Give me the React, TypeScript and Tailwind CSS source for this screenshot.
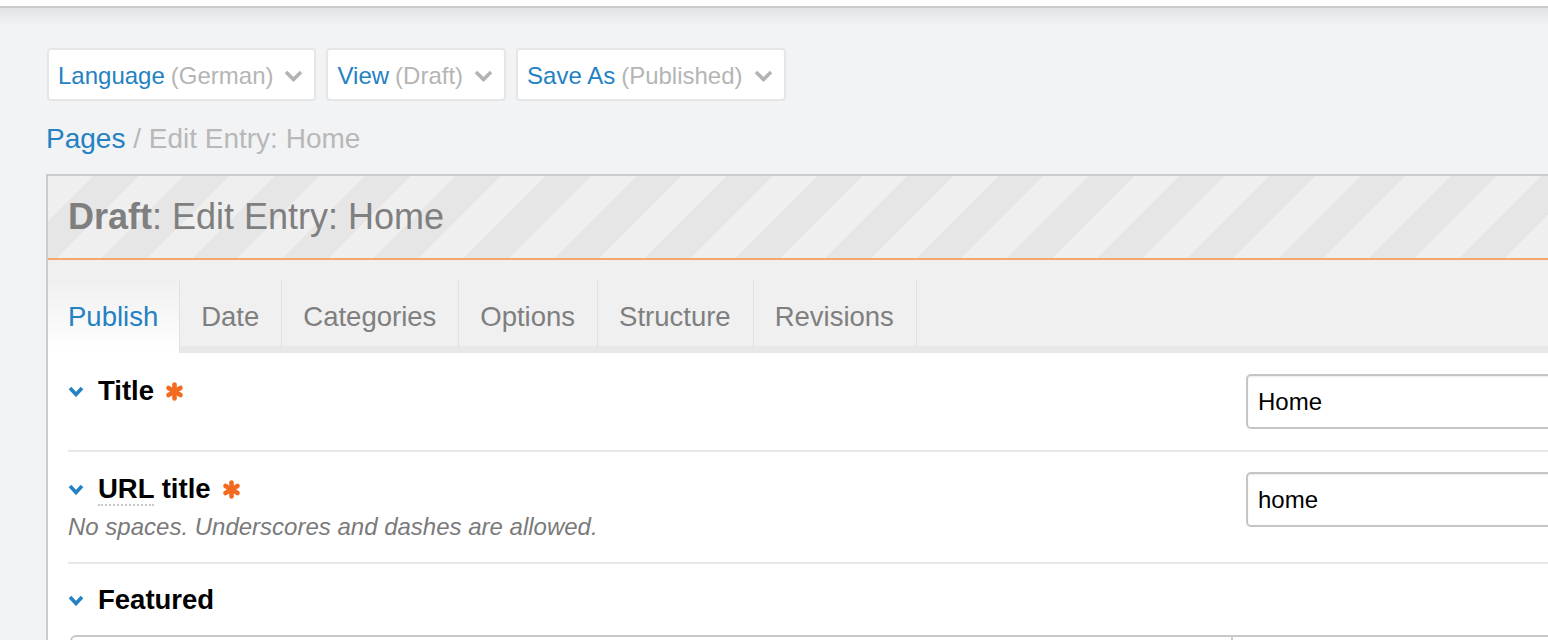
import React from "react";

const BLUE = "#2481c2";

function DownChevron({ color, w = 14, h = 10, sw = 3 }: { color: string; w?: number; h?: number; sw?: number }) {
  return (
    <svg width={w} height={h} viewBox={`0 0 ${w} ${h}`} fill="none">
      <path d={`M2 2 L${w / 2} ${h - 2.5} L${w - 2} 2`} stroke={color} strokeWidth={sw} />
    </svg>
  );
}

function Required() {
  // heavy six-armed asterisk
  return (
    <svg width="19" height="19" viewBox="0 0 19 19" className="ml-[11px]">
      <g stroke="#f26b21" strokeWidth="4.6" strokeLinecap="round">
        <line x1="9.5" y1="2.5" x2="9.5" y2="16.5" />
        <line x1="3.5" y1="6" x2="15.5" y2="13" />
        <line x1="3.5" y1="13" x2="15.5" y2="6" />
      </g>
    </svg>
  );
}

function MenuButton({ label, value }: { label: string; value: string }) {
  return (
    <button className="flex h-[53px] items-center rounded-[4px] border-2 border-[#e5e6e8] bg-white pl-[9px] pr-[11px] pt-[3px] text-[24px] leading-none">
      <span className="text-[#2481c2]">{label}</span>
      <span className="ml-[6px] text-[#b5b5b5]">({value})</span>
      <span className="ml-[11px] pb-[1px]">
        <DownChevron color="#b3b3b3" w={19} h={12} sw={3.6} />
      </span>
    </button>
  );
}

const tabs = ["Publish", "Date", "Categories", "Options", "Structure", "Revisions"];

function FieldLabel({ children, required }: { children: React.ReactNode; required?: boolean }) {
  return (
    <div className="flex items-center">
      <DownChevron color={BLUE} w={16} h={11} sw={3.6} />
      <span className="ml-[14px] text-[27.5px] font-bold leading-[30px] text-black">{children}</span>
      {required && <Required />}
    </div>
  );
}

function TextInput({ value }: { value: string }) {
  return (
    <div className="flex h-[55px] w-[420px] shrink-0 items-center rounded-[5px] border-2 border-[#c5c5c5] bg-white pl-[10px] text-[24px] text-black shadow-[inset_0_1px_2px_rgba(0,0,0,0.08)]">
      {value}
    </div>
  );
}

export default function App() {
  return (
    <div className="h-[640px] w-full overflow-hidden bg-[#f2f3f5] font-['Liberation_Sans',Arial,sans-serif]">
      <div className="h-[8px] border-b-2 border-[#cbcbcb] bg-white" />
      <div className="bg-[linear-gradient(to_bottom,#e2e3e5,#f2f3f5_18px)] pl-[46px] pt-[40px]">
        <div className="flex gap-[10px] pl-[1px]">
          <MenuButton label="Language" value="German" />
          <MenuButton label="View" value="Draft" />
          <MenuButton label="Save As" value="Published" />
        </div>

        <div className="mt-[23px] mb-[20px] text-[28px] leading-[30px]">
          <a className="text-[#2481c2]">Pages</a>
          <span className="text-[#b8b8b8]"> / Edit Entry: Home</span>
        </div>

        <div className="w-[1640px] border-2 border-b-0 border-[#cccccc]">
          <div className="flex h-[84px] items-center border-b-2 border-[#f8a56c] bg-[image:repeating-linear-gradient(135deg,#efefef_0px,#efefef_32px,#e6e6e6_32px,#e6e6e6_64px)] pl-[20px] text-[36px] leading-[40px] text-[#7f7f7f]">
            <span className="font-bold">Draft</span>
            <span>: Edit Entry: Home</span>
          </div>

          <div className="flex bg-[#f0f0f0] pt-[20px]">
            {tabs.map((t, i) =>
              i === 0 ? (
                <div
                  key={t}
                  className="h-[73px] border-r border-r-[#e2e2e2] bg-[linear-gradient(to_bottom,#f0f0f0,#ffffff)] pl-[20px] pr-[21px] pt-[22px] text-[27.5px] leading-[30px] text-[#2481c2]"
                >
                  {t}
                </div>
              ) : (
                <div
                  key={t}
                  className="h-[73px] border-r border-b-[7px] border-r-[#e2e2e2] border-b-[#e8e8e8] pl-[21px] pr-[22px] pt-[22px] text-[27.5px] leading-[30px] text-[#7f7f7f]"
                >
                  {t}
                </div>
              )
            )}
            <div className="h-[7px] flex-1 self-end bg-[#e8e8e8]" />
          </div>

          <div className="bg-white px-[20px]">
            <div className="flex border-b-2 border-[#e8e8e8] pt-[21px] pb-[21px]">
              <div className="w-[1178px] shrink-0 pt-[2px]">
                <FieldLabel required>Title</FieldLabel>
              </div>
              <TextInput value="Home" />
            </div>

            <div className="flex border-b-2 border-[#e8e8e8] pt-[20px] pb-[21px]">
              <div className="w-[1178px] shrink-0 pt-[2px]">
                <FieldLabel required>
                  <span className="border-b-2 border-dotted border-[#c8c8c8]">URL</span> title
                </FieldLabel>
                <div className="mt-[9px] text-[24px] italic leading-[28px] text-[#7a7a7a]">
                  No spaces. Underscores and dashes are allowed.
                </div>
              </div>
              <TextInput value="home" />
            </div>

            <div className="pt-[19px]">
              <div className="pt-[2px]">
                <FieldLabel>Featured</FieldLabel>
              </div>
              <div className="mt-[20px] ml-[2px] flex h-[30px] rounded-t-[6px] border-2 border-b-0 border-[#c8c8c8]">
                <div className="w-[1161px] border-r-2 border-[#c8c8c8]" />
              </div>
            </div>
          </div>
        </div>
      </div>
    </div>
  );
}
